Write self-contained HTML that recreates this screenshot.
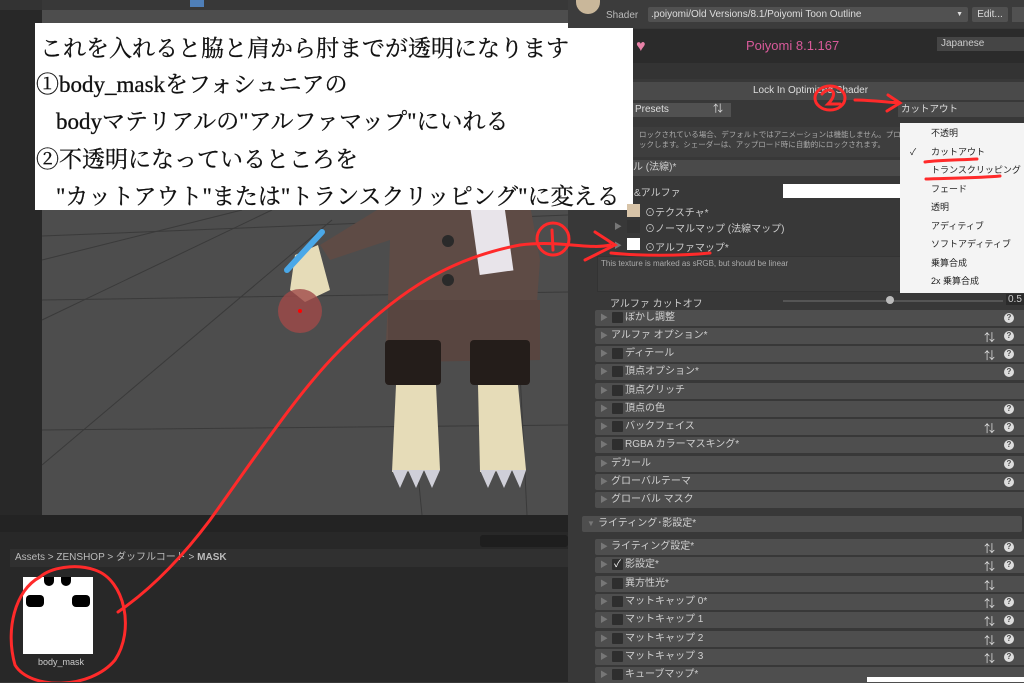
<!DOCTYPE html>
<html><head><meta charset="utf-8"><style>
*{margin:0;padding:0;box-sizing:border-box}
body{width:1024px;height:682px;overflow:hidden;background:#383838;position:relative;font-family:"Liberation Sans","Noto Sans CJK JP",sans-serif;color:#c8c8c8;font-size:10px}
.a{position:absolute}
.row{position:absolute;left:595px;width:440px;height:16px;background:#4e4e4e;border-radius:2px;font-size:10px;line-height:16px;color:#d0d0d0}
.row .t{position:absolute;left:5px;color:#777;font-size:8px}
.row .cb{position:absolute;left:17px;top:2px;width:11px;height:11px;background:#2e2e2e;border-radius:1px}
.row .l{position:absolute;left:16px}
.row .l2{position:absolute;left:30px}
.ic{position:absolute;top:3px;width:10px;height:10px;border-radius:50%;background:#ddd;color:#4e4e4e;font-size:8px;line-height:10px;text-align:center;font-weight:bold}
.sl{position:absolute;top:2px;color:#ddd;font-size:11px}
.dd div{height:18.5px;line-height:18.5px;padding-left:31px;color:#222;font-size:9px;white-space:nowrap}
.box{font-family:"Liberation Serif","Noto Serif CJK SC",serif;font-size:23px;color:#111;position:absolute;white-space:nowrap;-webkit-text-stroke:0.3px #111}
</style></head><body>
<div class="a" style="left:0;top:0;width:42px;height:520px;background:#282828"></div>
<div class="a" style="left:0;top:0;width:42px;height:10px;background:#333"></div>
<div class="a" style="left:42px;top:0;width:526px;height:10px;background:#383838"></div>
<div class="a" style="left:190px;top:0;width:14px;height:7px;background:#4f7fb8"></div>
<div class="a" style="left:42px;top:10px;width:526px;height:505px;background:#4d4d4d"></div>
<svg class="a" style="left:0;top:0" width="568" height="515">
<g stroke="#3a3a3a" stroke-width="1" fill="none">
<line x1="42" y1="236" x2="568" y2="215"/><line x1="42" y1="300" x2="568" y2="292"/><line x1="42" y1="430" x2="568" y2="425"/>
<line x1="42" y1="260" x2="242" y2="210"/><line x1="42" y1="320" x2="272" y2="210"/><line x1="42" y1="465" x2="332" y2="220"/>
<line x1="422" y1="515" x2="392" y2="210"/><line x1="527" y1="515" x2="512" y2="210"/>
</g>
<path d="M385 205 L530 205 L540 260 L535 330 L540 360 L385 362 L388 300 L390 240 L330 260 L320 245 Z" fill="#5e4b45"/>
<path d="M388 300 L540 300 L540 360 L388 362Z" fill="#584540"/>
<rect x="385" y="340" width="56" height="45" rx="4" fill="#241d1a"/><rect x="470" y="340" width="60" height="45" rx="4" fill="#241d1a"/>
<path d="M396 385 L436 385 L440 470 L392 472Z" fill="#e6dcb8"/><path d="M478 385 L518 385 L526 470 L480 472Z" fill="#e6dcb8"/>
<path d="M392 470 L400 488 L408 470 L416 488 L424 470 L432 488 L440 470Z" fill="#cfcfd8"/>
<path d="M480 470 L488 488 L496 470 L504 488 L512 470 L520 488 L526 470Z" fill="#cfcfd8"/>
<path d="M295 255 L318 245 L330 290 L305 302 L290 290Z" fill="#e6dcb8"/>
<circle cx="300" cy="311" r="22" fill="#a04a48" opacity=".8"/>
<circle cx="300" cy="311" r="2" fill="#f00"/>
<rect x="475" y="205" width="34" height="68" fill="#e8e4ea" transform="rotate(-8 492 240)"/>
<circle cx="448" cy="241" r="6" fill="#2a2a2a"/><circle cx="448" cy="280" r="6" fill="#2a2a2a"/>
<path d="M287 270 L322 232" stroke="#4aa8e8" stroke-width="6" stroke-linecap="round"/>
</svg>
<div class="a" style="left:35px;top:23px;width:598px;height:187px;background:#fff"></div>
<div class="box" style="left:40px;top:30px">これを入れると脇と肩から肘までが透明になります</div>
<div class="box" style="left:36px;top:66px">①body_maskをフォシュニアの</div>
<div class="box" style="left:56px;top:103px">bodyマテリアルの"アルファマップ"にいれる</div>
<div class="box" style="left:36px;top:141px">②不透明になっているところを</div>
<div class="box" style="left:56px;top:178px">"カットアウト"または"トランスクリッピング"に変える</div>
<div class="a" style="left:0;top:515px;width:568px;height:17px;background:#232323"></div>
<div class="a" style="left:0;top:532px;width:568px;height:150px;background:#282828"></div>
<div class="a" style="left:480px;top:535px;width:88px;height:12px;background:#1e1e1e;border-radius:3px"></div>
<div class="a" style="left:10px;top:549px;width:558px;height:18px;background:#303030;font-size:10px;line-height:18px;padding-left:5px;color:#bbb">Assets &gt; ZENSHOP &gt; ダッフルコート &gt; <b>MASK</b></div>
<div class="a" style="left:23px;top:577px;width:70px;height:77px;background:#fff"></div>
<div class="a" style="left:26px;top:595px;width:18px;height:12px;background:#000;border-radius:4px"></div>
<div class="a" style="left:72px;top:595px;width:18px;height:12px;background:#000;border-radius:4px"></div>
<div class="a" style="left:44px;top:577px;width:10px;height:9px;background:#000;border-radius:0 0 5px 5px"></div>
<div class="a" style="left:61px;top:577px;width:10px;height:9px;background:#000;border-radius:0 0 5px 5px"></div>
<div class="a" style="left:38px;top:657px;font-size:9px;color:#ccc">body_mask</div>
<div class="a" style="left:568px;top:0;width:456px;height:28px;background:#3c3c3c"></div>
<div class="a" style="left:576px;top:0;width:24px;height:14px;background:#c9b79a;border-radius:0 0 12px 12px"></div>
<div class="a" style="left:606px;top:10px;font-size:10px;color:#bbb">Shader</div>
<div class="a" style="left:648px;top:7px;width:320px;height:15px;background:#515151;border-radius:2px;font-size:10px;line-height:15px;padding-left:3px;color:#ddd">.poiyomi/Old Versions/8.1/Poiyomi Toon Outline<span style="position:absolute;right:5px;font-size:7px">▼</span></div>
<div class="a" style="left:972px;top:7px;width:36px;height:15px;background:#515151;border-radius:2px;font-size:10px;line-height:15px;text-align:center;color:#ddd">Edit...</div>
<div class="a" style="left:1012px;top:7px;width:12px;height:15px;background:#515151"></div>
<div class="a" style="left:633px;top:29px;width:391px;height:34px;background:#2b2b2b"></div>
<div class="a" style="left:636px;top:38px;width:18px;height:16px;color:#e882a8;font-size:16px">♥</div>
<div class="a" style="left:746px;top:38px;font-size:13px;color:#d85a9a">Poiyomi 8.1.167</div>
<div class="a" style="left:937px;top:37px;width:87px;height:14px;background:#454545;font-size:10px;line-height:14px;padding-left:4px;color:#ccc">Japanese</div>
<div class="a" style="left:633px;top:63px;width:391px;height:16px;background:#333"></div>
<div class="a" style="left:633px;top:82px;width:391px;height:18px;background:#4a4a4a;font-size:10px;line-height:18px;text-align:center;color:#ddd;padding-right:36px">Lock In Optimized Shader</div>
<div class="a" style="left:633px;top:103px;width:98px;height:14px;background:#515151;font-size:10px;line-height:14px;padding-left:2px;color:#ddd">Presets<span style="position:absolute;right:8px">⇅</span></div>
<div class="a" style="left:898px;top:102px;width:126px;height:15px;background:#4a4a4a;font-size:9.5px;line-height:15px;padding-left:3px;color:#ddd">カットアウト</div>
<div class="a" style="left:633px;top:127px;width:270px;height:30px;background:#3e3e3e;font-size:7.5px;line-height:10px;padding:3px 0 0 6px;color:#aaa;white-space:nowrap;overflow:hidden">ロックされている場合、デフォルトではアニメーションは機能しません。プロパティをア<br>ックします。シェーダーは、アップロード時に自動的にロックされます。</div>
<div class="a" style="left:633px;top:160px;width:391px;height:16px;background:#4a4a4a;font-size:10px;line-height:16px;color:#ccc">ル (法線)*</div>
<div class="a" style="left:634px;top:184px;font-size:10px;color:#ccc">&amp;アルファ</div>
<div class="a" style="left:783px;top:184px;width:120px;height:14px;background:#fff"></div>
<div class="a" style="left:627px;top:204px;width:13px;height:13px;background:#d8c4a8"></div>
<div class="a" style="left:645px;top:204px;font-size:10px;color:#ccc">⊙テクスチャ*</div>
<div class="a" style="left:614px;top:221px;font-size:8px;color:#777">▶</div>
<div class="a" style="left:627px;top:220px;width:13px;height:13px;background:#333"></div>
<div class="a" style="left:645px;top:220px;font-size:10px;color:#ccc">⊙ノーマルマップ (法線マップ)</div>
<div class="a" style="left:614px;top:240px;font-size:8px;color:#777">▶</div>
<div class="a" style="left:627px;top:238px;width:13px;height:12px;background:#fff"></div>
<div class="a" style="left:645px;top:239px;font-size:10px;color:#ccc">⊙アルファマップ*</div>
<div class="a" style="left:597px;top:256px;width:310px;height:36px;background:#3d3d3d;border:1px solid #333;font-size:8px;padding:2px 3px;color:#aaa">This texture is marked as sRGB, but should be linear</div>
<div class="a" style="left:610px;top:295px;font-size:10px;color:#ccc">アルファ カットオフ</div>
<div class="a" style="left:783px;top:300px;width:220px;height:2px;background:#555"></div>
<div class="a" style="left:886px;top:296px;width:8px;height:8px;border-radius:50%;background:#bbb"></div>
<div class="a" style="left:1006px;top:294px;font-size:10px;color:#ccc;background:#2a2a2a;padding:0 2px">0.5</div>
<div class="row" style="top:310px"><span class="t">▶</span><span class="cb"></span><span class="l2">ぼかし調整</span><span class="ic" style="left:409px">?</span></div>
<div class="row" style="top:328px"><span class="t">▶</span><span class="l">アルファ オプション*</span><span class="sl" style="left:389px">⇅</span><span class="ic" style="left:409px">?</span></div>
<div class="row" style="top:346px"><span class="t">▶</span><span class="cb"></span><span class="l2">ディテール</span><span class="sl" style="left:389px">⇅</span><span class="ic" style="left:409px">?</span></div>
<div class="row" style="top:364px"><span class="t">▶</span><span class="cb"></span><span class="l2">頂点オプション*</span><span class="ic" style="left:409px">?</span></div>
<div class="row" style="top:383px"><span class="t">▶</span><span class="cb"></span><span class="l2">頂点グリッチ</span></div>
<div class="row" style="top:401px"><span class="t">▶</span><span class="cb"></span><span class="l2">頂点の色</span><span class="ic" style="left:409px">?</span></div>
<div class="row" style="top:419px"><span class="t">▶</span><span class="cb"></span><span class="l2">バックフェイス</span><span class="sl" style="left:389px">⇅</span><span class="ic" style="left:409px">?</span></div>
<div class="row" style="top:437px"><span class="t">▶</span><span class="cb"></span><span class="l2">RGBA カラーマスキング*</span><span class="ic" style="left:409px">?</span></div>
<div class="row" style="top:456px"><span class="t">▶</span><span class="l">デカール</span><span class="ic" style="left:409px">?</span></div>
<div class="row" style="top:474px"><span class="t">▶</span><span class="l">グローバルテーマ</span><span class="ic" style="left:409px">?</span></div>
<div class="row" style="top:492px"><span class="t">▶</span><span class="l">グローバル マスク</span></div>
<div class="row" style="top:516px;left:582px;height:16px"><span class="t">▼</span><span class="l">ライティング･影設定*</span></div>
<div class="row" style="top:539px"><span class="t">▶</span><span class="l">ライティング設定*</span><span class="sl" style="left:389px">⇅</span><span class="ic" style="left:409px">?</span></div>
<div class="row" style="top:557px"><span class="t">▶</span><span class="cb" style="color:#fff;font-size:10px;line-height:11px;text-align:center">✓</span><span class="l2">影設定*</span><span class="sl" style="left:389px">⇅</span><span class="ic" style="left:409px">?</span></div>
<div class="row" style="top:576px"><span class="t">▶</span><span class="cb"></span><span class="l2">異方性光*</span><span class="sl" style="left:389px">⇅</span></div>
<div class="row" style="top:594px"><span class="t">▶</span><span class="cb"></span><span class="l2">マットキャップ 0*</span><span class="sl" style="left:389px">⇅</span><span class="ic" style="left:409px">?</span></div>
<div class="row" style="top:612px"><span class="t">▶</span><span class="cb"></span><span class="l2">マットキャップ 1</span><span class="sl" style="left:389px">⇅</span><span class="ic" style="left:409px">?</span></div>
<div class="row" style="top:631px"><span class="t">▶</span><span class="cb"></span><span class="l2">マットキャップ 2</span><span class="sl" style="left:389px">⇅</span><span class="ic" style="left:409px">?</span></div>
<div class="row" style="top:649px"><span class="t">▶</span><span class="cb"></span><span class="l2">マットキャップ 3</span><span class="sl" style="left:389px">⇅</span><span class="ic" style="left:409px">?</span></div>
<div class="row" style="top:667px"><span class="t">▶</span><span class="cb"></span><span class="l2">キューブマップ*</span></div>
<div class="a" style="left:867px;top:677px;width:157px;height:5px;background:#fff"></div>
<div class="a dd" style="left:900px;top:123px;width:124px;height:170px;background:#f4f4f4;padding-top:1px">
<div>不透明</div><div style="position:relative"><span style="position:absolute;left:10px">✓</span>カットアウト</div><div>トランスクリッピング</div><div>フェード</div><div>透明</div><div>アディティブ</div><div>ソフトアディティブ</div><div>乗算合成</div><div>2x 乗算合成</div>
</div>
<svg class="a" style="left:0;top:0" width="1024" height="682" fill="none" stroke="#ff2a2a" stroke-width="3" stroke-linecap="round">
<path d="M118 612 C150 590 180 560 210 520 C260 450 300 390 340 350 C390 300 440 260 520 245 C560 240 590 250 610 245"/>
<path d="M585 260 L615 245 L595 232"/>
<path d="M40 577 C15 590 5 630 15 665 C30 690 90 690 115 660 C135 630 125 580 95 570 C75 563 50 568 40 577"/>
<ellipse cx="553" cy="239" rx="16" ry="16"/><path d="M552 230 L553 250"/>
<path d="M611 253 C640 256 680 256 710 253"/>
<ellipse cx="830" cy="98" rx="15" ry="12"/><path d="M822 94 C830 85 840 92 828 104 L840 104"/>
<path d="M855 100 C870 100 885 102 900 103 M888 95 L900 103 L887 111"/>
<path d="M925 162 C940 160 960 160 977 159"/>
<path d="M926 179 C950 178 980 178 1000 176"/>
</svg>
</body></html>
